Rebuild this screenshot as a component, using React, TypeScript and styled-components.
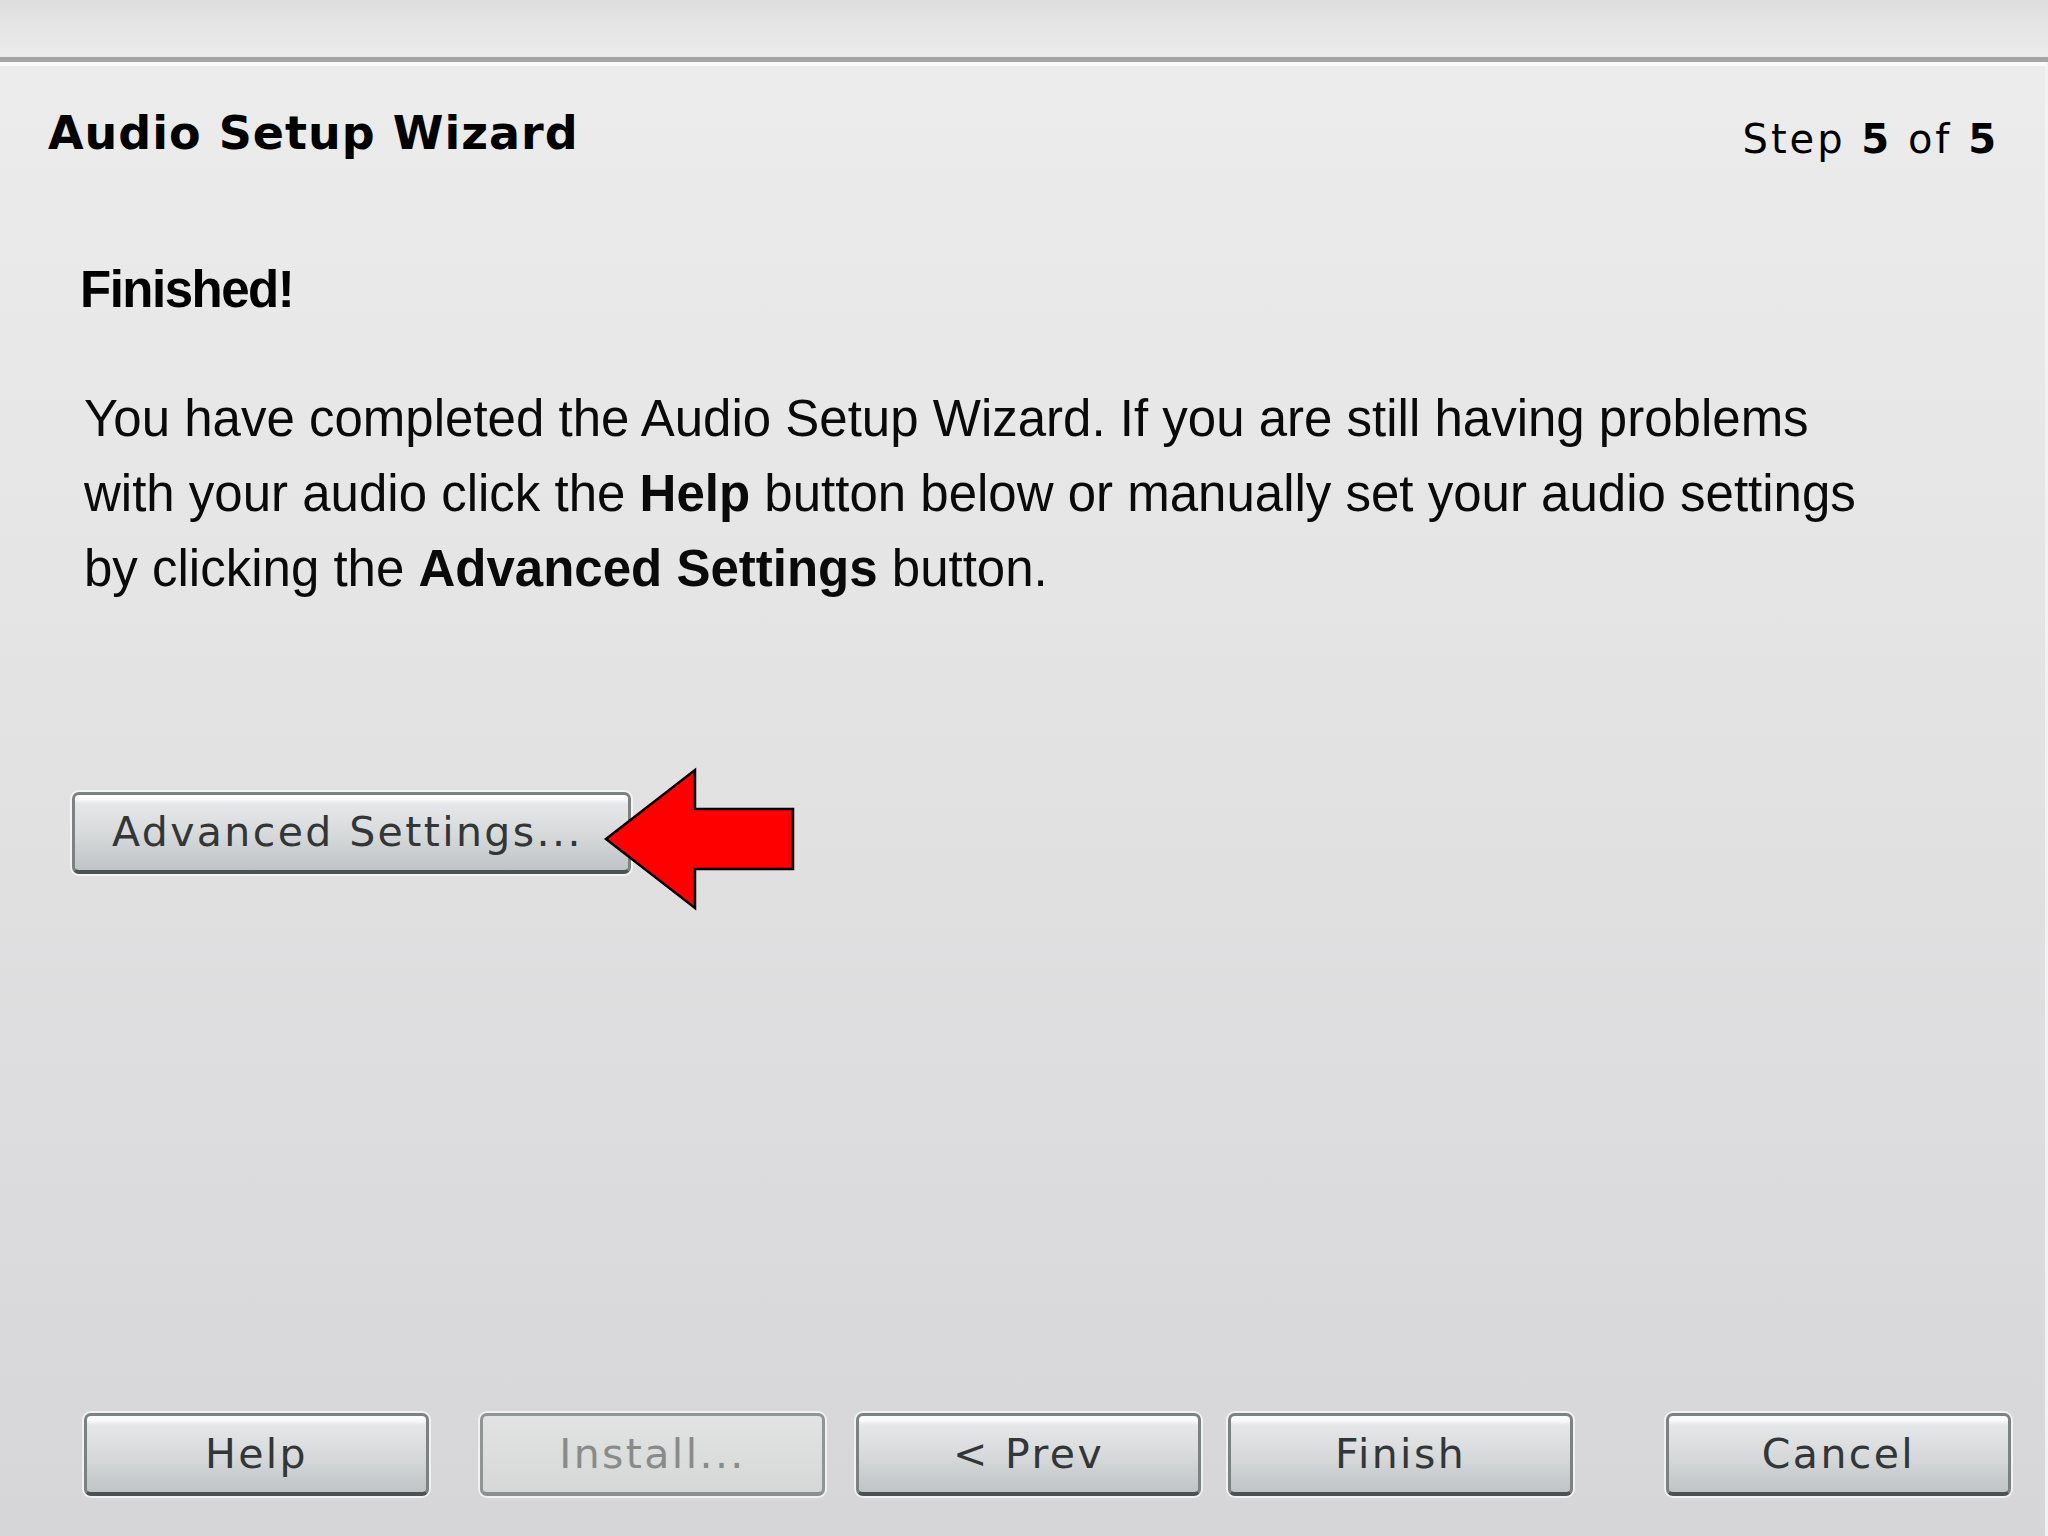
import React from "react";
import styled, { createGlobalStyle, css } from "styled-components";

const GlobalStyle = createGlobalStyle`
  html, body {
    margin: 0;
    padding: 0;
    background: #e4e4e4;
  }
  #root {
    min-height: 100vh;
  }
`;

const Window = styled.div`
  display: flex;
  flex-direction: column;
  min-height: 100vh;
  width: 100%;
`;

const TopStrip = styled.div`
  height: 57px;
  flex: none;
  background: linear-gradient(180deg, #dddddd 0%, #e5e5e5 45%, #ebebeb 100%);
  border-bottom: 5px solid #a4a4a4;
`;

const Panel = styled.main`
  flex: 1;
  display: flex;
  flex-direction: column;
  border-top: 4px solid #fafafa;
  border-right: 3px solid #f2f2f2;
  background: linear-gradient(180deg, #ececec 0%, #e5e5e5 35%, #d6d5d8 100%);
`;

const Header = styled.header`
  display: flex;
  justify-content: space-between;
  align-items: flex-start;
  padding: 40px 46px 0 48px;
`;

const Title = styled.h1`
  margin: 0;
  font-family: "DejaVu Sans", sans-serif;
  font-weight: 700;
  font-size: 46px;
  line-height: 54px;
  letter-spacing: 1px;
  color: #000;
`;

const StepLabel = styled.div`
  margin-top: 6px;
  font-family: "DejaVu Sans", sans-serif;
  font-weight: 400;
  font-size: 40px;
  line-height: 54px;
  letter-spacing: 3px;
  color: #000;

  strong {
    font-weight: 700;
  }
`;

const Content = styled.section`
  padding-left: 80px;
  display: flex;
  flex-direction: column;
`;

const Heading = styled.h2`
  margin: 94px 0 0;
  font-family: "Liberation Sans", Arial, sans-serif;
  font-weight: 700;
  font-size: 51px;
  line-height: 60px;
  letter-spacing: -1.5px;
  color: #000;
`;

const Paragraph = styled.p`
  margin: 61px 0 0;
  padding-left: 4px;
  font-family: "Liberation Sans", Arial, sans-serif;
  font-weight: 400;
  font-size: 51px;
  line-height: 75px;
  white-space: nowrap;
  color: #0a0a0a;

  b {
    font-weight: 700;
  }
`;

const AdvancedRow = styled.div`
  position: relative;
  margin-top: 186px;
  padding-left: 72px;
  height: 82px;
`;

const buttonBase = css`
  box-sizing: border-box;
  display: flex;
  align-items: center;
  font-family: "DejaVu Sans", sans-serif;
  font-size: 41px;
  line-height: 1;
  letter-spacing: 2.4px;
  border-radius: 7px;
  box-shadow: 0 0 0 2px rgba(250, 250, 250, 0.75);
  cursor: default;
  padding: 0;
  margin: 0;
`;

const WizardButton = styled.button<{ $width: number; $height: number; $align?: "start" | "center"; $disabled?: boolean }>`
  ${buttonBase};
  width: ${(p) => p.$width}px;
  height: ${(p) => p.$height}px;
  justify-content: ${(p) => (p.$align === "start" ? "flex-start" : "center")};
  padding-left: ${(p) => (p.$align === "start" ? "37px" : "0")};
  ${(p) =>
    p.$disabled
      ? css`
          color: #8a8a8a;
          border: 3px solid #8f9494;
          border-bottom: 4px solid #8a8f8f;
          background: linear-gradient(180deg, #e2e3e3 0%, #dcdddd 50%, #d6d8d8 100%);
        `
      : css`
          color: #333636;
          border: 3px solid #7c8282;
          border-bottom: 4px solid #4b5253;
          background: linear-gradient(
            180deg,
            #fdfdfd 0px,
            #fbfbfb 4px,
            #e6e7e8 9px,
            #d8dadb 50%,
            #c0c4c6 100%
          );
        `}
`;

const ArrowMark = styled.svg`
  position: absolute;
  left: 604px;
  top: -24px;
  width: 192px;
  height: 144px;
  overflow: visible;
`;

const Footer = styled.footer`
  margin-top: auto;
  display: flex;
  align-items: center;
  padding: 0 0 40px 84px;
`;

const FooterSlot = styled.div<{ $gap: number }>`
  margin-left: ${(p) => p.$gap}px;
`;

const footerButtons: { label: string; gap: number; disabled?: boolean }[] = [
  { label: "Help", gap: 0 },
  { label: "Install...", gap: 51, disabled: true },
  { label: "< Prev", gap: 31 },
  { label: "Finish", gap: 27 },
  { label: "Cancel", gap: 93 },
];

export default function App() {
  return (
    <>
      <GlobalStyle />
      <Window>
        <TopStrip />
        <Panel>
          <Header>
            <Title>Audio Setup Wizard</Title>
            <StepLabel>
              Step <strong>5</strong> of <strong>5</strong>
            </StepLabel>
          </Header>
          <Content>
            <Heading>Finished!</Heading>
            <Paragraph>
              You have completed the Audio Setup Wizard. If you are still having problems
              <br />
              with your audio click the <b>Help</b> button below or manually set your audio settings
              <br />
              by clicking the <b>Advanced Settings</b> button.
            </Paragraph>
          </Content>
          <AdvancedRow>
            <WizardButton type="button" $width={559} $height={82} $align="start">
              Advanced Settings...
            </WizardButton>
            <ArrowMark viewBox="0 0 192 144">
              <polygon
                points="2,71 91,2 91,41 189,41 189,101 91,101 91,140"
                fill="#ff0000"
                stroke="#000"
                strokeWidth="2.5"
                strokeLinejoin="miter"
              />
            </ArrowMark>
          </AdvancedRow>
          <Footer>
            {footerButtons.map((b) => (
              <FooterSlot key={b.label} $gap={b.gap}>
                <WizardButton type="button" $width={345} $height={83} $disabled={b.disabled}>
                  {b.label}
                </WizardButton>
              </FooterSlot>
            ))}
          </Footer>
        </Panel>
      </Window>
    </>
  );
}
